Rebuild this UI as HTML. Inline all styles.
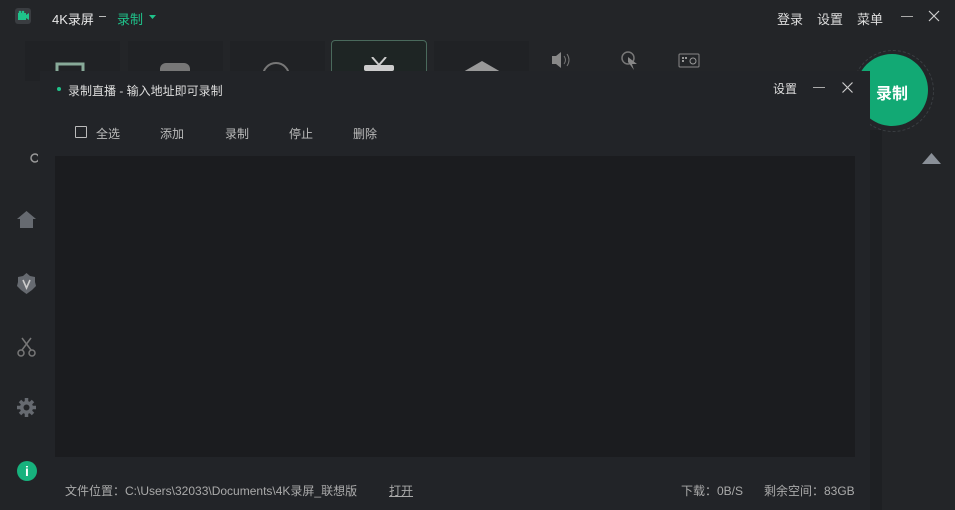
<!DOCTYPE html>
<html><head><meta charset="utf-8"><style>
*{margin:0;padding:0;box-sizing:border-box}
body{width:955px;height:510px;overflow:hidden;background:#232528;font-family:"Liberation Sans","Noto Sans CJK SC",sans-serif;position:relative;color:#ddd}
.abs{position:absolute}
.t{font-size:13px;white-space:nowrap}
</style></head><body>
<div class="abs" style="left:15px;top:8px;width:16px;height:16px;background:#3a3d41;border-radius:3px"></div>
<svg class="abs" style="left:17px;top:10px" width="13" height="12"><rect x="1" y="3" width="8" height="7" fill="#1fc28a"/><path d="M9 5 L12 3 V10 L9 8Z" fill="#1fc28a"/><circle cx="3" cy="2" r="1.3" fill="#1fc28a"/><circle cx="6" cy="2" r="1.3" fill="#1fc28a"/></svg>
<div class="abs t" style="left:52px;top:9px;color:#e8e8e8">4K录屏</div>
<div class="abs" style="left:99px;top:16px;width:7px;height:1px;background:#bbb"></div>
<div class="abs t" style="left:117px;top:9px;color:#1fc28a">录制</div>
<svg class="abs" style="left:149px;top:15px" width="7" height="4"><path d="M0 0H7L3.5 4Z" fill="#1fc28a"/></svg>
<div class="abs t" style="left:777px;top:9px">登录</div>
<div class="abs t" style="left:817px;top:9px">设置</div>
<div class="abs t" style="left:857px;top:9px">菜单</div>
<div class="abs" style="left:901px;top:16px;width:12px;height:1px;background:#aaa"></div>
<svg class="abs" style="left:928px;top:10px" width="12" height="12"><path d="M1 1L11 11M11 1L1 11" stroke="#ccc" stroke-width="1.2"/></svg>
<div class="abs" style="left:25px;top:41px;width:95px;height:40px;background:#202225"></div>
<div class="abs" style="left:128px;top:41px;width:95px;height:40px;background:#202225"></div>
<div class="abs" style="left:230px;top:41px;width:95px;height:40px;background:#202225"></div>
<div class="abs" style="left:331px;top:40px;width:96px;height:40px;border:1px solid #4a6a5c;border-radius:4px;background:#1e2524"></div>
<div class="abs" style="left:434px;top:41px;width:95px;height:40px;background:#202225"></div>
<svg class="abs" style="left:55px;top:61px" width="30" height="10"><path d="M2 10V3H28V10" stroke="#8a9" stroke-width="3" fill="none"/></svg>
<div class="abs" style="left:160px;top:63px;width:30px;height:8px;background:#777;border-radius:6px 6px 0 0"></div>
<div class="abs" style="left:262px;top:62px;width:28px;height:28px;border:2px solid #777;border-radius:50%"></div>
<svg class="abs" style="left:362px;top:57px" width="34" height="14"><path d="M10 0L17 8L24 0" stroke="#ccc" stroke-width="2" fill="none"/><rect x="2" y="8" width="30" height="6" rx="2" fill="#ccc"/></svg>
<svg class="abs" style="left:463px;top:60px" width="38" height="12"><path d="M0 12L19 1L38 12Z" fill="#999"/></svg>
<svg class="abs" style="left:550px;top:50px" width="24" height="20"><path d="M2 6H6L11 2V18L6 14H2Z" fill="#888"/><path d="M14 6Q17 10 14 14M17 4Q21 10 17 16" stroke="#777" fill="none"/></svg>
<svg class="abs" style="left:620px;top:50px" width="20" height="22"><circle cx="8" cy="8" r="6" stroke="#777" fill="none" stroke-width="1.5"/><path d="M8 7L17 14L12 14L14 20L8 12Z" fill="#888"/></svg>
<svg class="abs" style="left:678px;top:53px" width="24" height="16"><rect x="1" y="1" width="20" height="13" rx="1" stroke="#888" fill="none"/><rect x="4" y="4" width="2" height="2" fill="#999"/><rect x="7" y="4" width="2" height="2" fill="#999"/><rect x="4" y="7" width="2" height="2" fill="#999"/><circle cx="15" cy="8" r="3" stroke="#999" fill="none"/></svg>
<div class="abs" style="left:852px;top:50px;width:82px;height:82px;border-radius:50%;border:1px dashed #3a3e42"></div>
<div class="abs" style="left:856px;top:54px;width:72px;height:72px;border-radius:50%;background:#12a974"></div>
<div class="abs" style="left:876px;top:80px;font-size:16px;font-weight:bold;color:#fff">录制</div>
<svg class="abs" style="left:922px;top:153px" width="19" height="11"><path d="M0 11L9.5 0L19 11Z" fill="#8a9098"/></svg>
<div class="abs" style="left:0;top:180px;width:40px;height:330px;background:#222427"></div>
<svg class="abs" style="left:17px;top:211px" width="19" height="17"><path d="M9.5 0L19 8H16V17H3V8H0Z" fill="#666a70"/></svg>
<svg class="abs" style="left:17px;top:273px" width="19" height="21"><path d="M9.5 0L13 3L18 4L18 9L19 13L15 17L9.5 21L4 17L0 13L1 9L1 4L6 3Z" fill="#666a70"/><path d="M6 7L9.5 15L13 7" stroke="#ccc" stroke-width="1.6" fill="none"/></svg>
<svg class="abs" style="left:17px;top:337px" width="19" height="20"><circle cx="4" cy="16" r="3" stroke="#777" fill="none" stroke-width="1.5"/><circle cx="15" cy="16" r="3" stroke="#777" fill="none" stroke-width="1.5"/><path d="M5 13L14 1M14 13L5 1" stroke="#777" stroke-width="1.5"/></svg>
<svg class="abs" style="left:17px;top:398px" width="19" height="19"><circle cx="9.5" cy="9.5" r="6.5" fill="#666a70"/><path d="M9.5 0V19M0 9.5H19M3 3L16 16M16 3L3 16" stroke="#666a70" stroke-width="3.5"/><circle cx="9.5" cy="9.5" r="3" fill="#232528"/></svg>
<div class="abs" style="left:17px;top:461px;width:20px;height:20px;border-radius:50%;background:#17b27d;color:#fff;font-size:14px;font-weight:bold;text-align:center;line-height:20px">i</div>
<svg class="abs" style="left:28px;top:151px" width="10" height="14"><circle cx="7" cy="7" r="4" stroke="#999" fill="none" stroke-width="1.5"/></svg>
<!-- dialog (on top of the record button) -->
<div class="abs" style="left:40px;top:71px;width:830px;height:439px;background:#222428"></div>
<div class="abs" style="left:870px;top:130px;width:12px;height:380px;background:#1e2023"></div>
<div class="abs" style="left:57px;top:87px;width:4px;height:4px;border-radius:50%;background:#1fc28a"></div>
<div class="abs" style="left:68px;top:82px;font-size:12px;color:#ddd">录制直播 - 输入地址即可录制</div>
<div class="abs" style="left:773px;top:80px;font-size:12px;color:#ddd">设置</div>
<div class="abs" style="left:813px;top:87px;width:12px;height:1px;background:#aaa"></div>
<svg class="abs" style="left:842px;top:82px" width="11" height="11"><path d="M0.5 0.5L10.5 10.5M10.5 0.5L0.5 10.5" stroke="#ccc" stroke-width="1.2"/></svg>
<div class="abs" style="left:75px;top:126px;width:12px;height:12px;border:1px solid #bbb;border-radius:1px"></div>
<div class="abs" style="left:96px;top:125px;font-size:12px;color:#bbb">全选</div>
<div class="abs" style="left:160px;top:125px;font-size:12px;color:#bbb">添加</div>
<div class="abs" style="left:225px;top:125px;font-size:12px;color:#bbb">录制</div>
<div class="abs" style="left:289px;top:125px;font-size:12px;color:#bbb">停止</div>
<div class="abs" style="left:353px;top:125px;font-size:12px;color:#bbb">删除</div>
<div class="abs" style="left:55px;top:156px;width:800px;height:301px;background:#1b1c1f"></div>
<div class="abs" style="left:65px;top:482px;font-size:12px;color:#aaa">文件位置：C:\Users\32033\Documents\4K录屏_联想版</div>
<div class="abs" style="left:389px;top:482px;font-size:12px;color:#aaa;text-decoration:underline">打开</div>
<div class="abs" style="left:681px;top:482px;font-size:12px;color:#aaa">下载：0B/S</div>
<div class="abs" style="left:764px;top:482px;font-size:12px;color:#aaa">剩余空间：83GB</div>
</body></html>
